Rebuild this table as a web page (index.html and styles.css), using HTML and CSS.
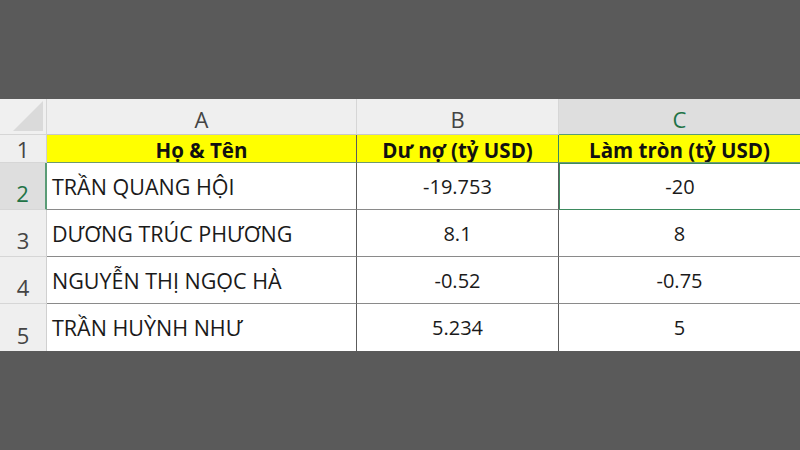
FILE: index.html
```html
<!DOCTYPE html>
<html lang="vi">
<head>
<meta charset="utf-8">
<title>Bảng tính</title>
<link rel="stylesheet" href="styles.css">
</head>
<body>
<div class="page">
  <div class="sheet">
    <div class="corner"><div class="tri"></div></div>
    <div class="colhead">A</div>
    <div class="colhead">B</div>
    <div class="colhead sel">C</div>

    <div class="rowhead r1">1</div>
    <div class="cell hdr">Họ &amp; Tên</div>
    <div class="cell hdr green-right">Dư nợ (tỷ USD)</div>
    <div class="cell hdr">Làm tròn (tỷ USD)</div>

    <div class="rowhead sel">2</div>
    <div class="cell name">TRẦN QUANG HỘI</div>
    <div class="cell num">-19.753</div>
    <div class="cell num active">-20</div>

    <div class="rowhead">3</div>
    <div class="cell name">DƯƠNG TRÚC PHƯƠNG</div>
    <div class="cell num">8.1</div>
    <div class="cell num">8</div>

    <div class="rowhead">4</div>
    <div class="cell name">NGUYỄN THỊ NGỌC HÀ</div>
    <div class="cell num">-0.52</div>
    <div class="cell num">-0.75</div>

    <div class="rowhead last">5</div>
    <div class="cell name last">TRẦN HUỲNH NHƯ</div>
    <div class="cell num last">5.234</div>
    <div class="cell num last">5</div>
  </div>
</div>
</body>
</html>
```
FILE: styles.css
```css
html, body {
  margin: 0;
  padding: 0;
  background: #5a5a5a;
  width: 800px;
  height: 450px;
  overflow: hidden;
}

.page {
  padding-top: 99px;
}

.sheet {
  display: grid;
  grid-template-columns: 47px 310px 202px 241px;
  grid-template-rows: 36px 28px 47px 47px 47px 47px;
  background: #ffffff;
  font-family: "Open Sans", "Noto Sans", sans-serif;
  color: #1a1a1a;
}

.corner {
  background: #f0f0f0;
  border-right: 1px solid #d6d6d6;
  border-bottom: 1px solid #d6d6d6;
  position: relative;
}

.tri {
  position: absolute;
  right: 3px;
  bottom: 3px;
  width: 0;
  height: 0;
  border-left: 30px solid transparent;
  border-bottom: 30px solid #dadada;
}

.colhead {
  background: #efefef;
  border-right: 1px solid #d6d6d6;
  border-bottom: 1px solid #c8c8c8;
  display: flex;
  align-items: center;
  justify-content: center;
  font-size: 22px;
  color: #444;
  padding-top: 4px;
}

.colhead.sel {
  background: #dedede;
  color: #217346;
  border-bottom: 1px solid #5a9c76;
  border-right: none;
}

.rowhead {
  background: #efefef;
  border-right: 1px solid #d0d0d0;
  border-bottom: 1px solid #d6d6d6;
  display: flex;
  align-items: flex-end;
  justify-content: center;
  font-size: 22px;
  color: #444;
  padding-bottom: 1px;
}

.rowhead.r1 {
  align-items: center;
  padding-bottom: 0;
}

.rowhead.sel {
  background: #dedede;
  color: #217346;
  border-right: 2px solid #5a9c76;
}

.cell {
  border-right: 1px solid #5c5c5c;
  border-bottom: 1px solid #8a8a8a;
  display: flex;
  align-items: center;
  font-size: 20px;
  white-space: nowrap;
  overflow: hidden;
}

.cell:nth-child(4n) {
  border-right: none;
}

.hdr {
  background: #ffff00;
  font-weight: 700;
  font-size: 20.5px;
  justify-content: center;
  border-bottom: 1px solid #6f9a6f;
  color: #111;
  padding-top: 2px;
}

.green-right {
  border-right-color: #3d8a5e;
}

.name {
  padding-left: 5px;
  font-size: 21.5px;
}

.num {
  justify-content: center;
}

.active {
  border: 1px solid #3d8a5e;
  border-right: none;
}

.last {
  border-bottom: none;
}
```
